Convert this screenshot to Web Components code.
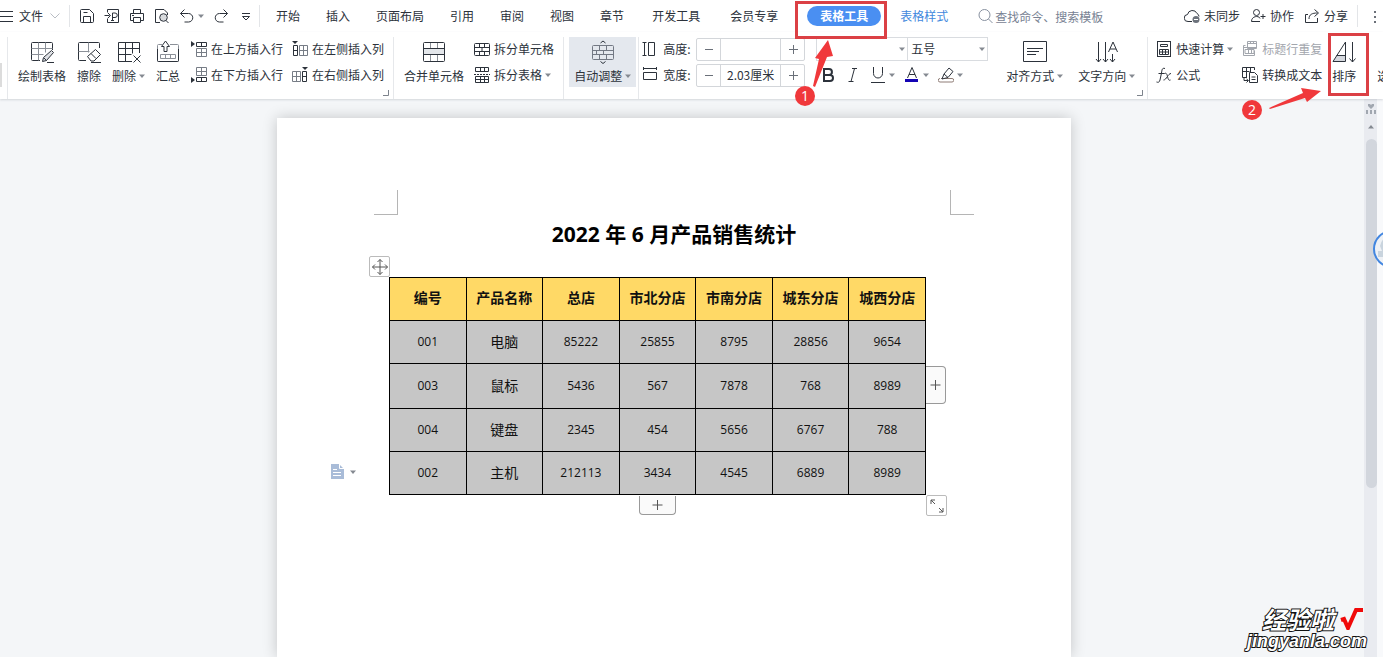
<!DOCTYPE html>
<html lang="zh-CN">
<head>
<meta charset="utf-8">
<title>2022 年 6 月产品销售统计</title>
<style>
html, body { margin: 0; height: 100%; }
body {
  font: 12px/16px "Noto Sans CJK SC", "Liberation Sans", sans-serif;
  color: #2c323b;
  overflow: hidden;
}
</style>
</head>
<body>
<doc-app></doc-app>
<script>
const BASE = `
  *, *::before, *::after { box-sizing: border-box; }
  button, input, select { font: inherit; color: inherit; margin: 0; padding: 0; border: 0; background: none; border-radius: 0; outline: 0; }
  button { cursor: pointer; white-space: nowrap; }
  svg { display: block; }
`;
function define(name, css, html, setup) {
  customElements.define(name, class extends HTMLElement {
    connectedCallback() {
      if (this.shadowRoot) return;
      const root = this.attachShadow({ mode: 'open' });
      root.innerHTML = `<style>${BASE}${css}</style>${typeof html === 'function' ? html(this) : html}`;
      if (setup) setup(root, this);
    }
  });
}

/* ---------- icons: [size, markup] ---------- */
const ICONS = {
  menu: [16, '<path d="M0 3.500h13M0 8.500h13M0 13.500h13"/>'],
  chevron: [12, '<path stroke="#b9bdc4" d="M1.500 3.500l4.500 4.500 4.500-4.500"/>'],
  save: [16, '<path d="M1.500 2.500q0-1 1-1h8l4 4v8q0 1-1 1h-11q-1 0-1-1zM4.500 14.500v-6h7v6M4.500 4.500h4"/>'],
  export: [16, '<path d="M3.500 4.500v-3h11v13h-11v-4M.5 7.500h5M4 5l2.500 2.500L4 10M8.500 12v-7h2.500a2.200 2.200 0 0 1 0 4.500h-2.500M7 12.500h3"/>'],
  print: [16, '<path d="M4.500 5.500v-4h7v4M4.500 12.500h-3v-7h13v7h-3M4.500 9.500h7v5h-7zM3 7.500h2"/>'],
  preview: [16, '<path d="M6 14.500h-4.500v-13h8.500l3.500 3.500v2M12 12.500l2.500 2.500"/><circle cx="9.500" cy="9.500" r="3.800" fill="#d8dadd"/>'],
  undo: [16, '<path d="M5.500 1.500l-4 4 4 4M1.500 5.500h8a4.200 4.200 0 0 1 0 8.500h-4"/>'],
  redo: [16, '<path d="M10.500 1.500l4 4-4 4M14.500 5.500h-8a4.200 4.200 0 0 0 0 8.500h4"/>'],
  more: [16, '<path d="M4 5.500h8M4.500 8.500l3.500 3.500 3.500-3.500z"/>'],
  caret: [6, '<path d="M0 1.500h6l-3 3.500z" fill="#858a91" stroke="none"/>'],
  search: [16, '<circle cx="6.500" cy="7" r="5.500" stroke="#8891a0"/><path stroke="#8891a0" d="M10.500 11l4 4"/>'],
  cloud: [16, '<path d="M8 13.500H4a3.500 3.500 0 0 1-.5-7 5 5 0 0 1 9.500-1 3.500 3.500 0 0 1 2 3"/><circle cx="12" cy="11.500" r="3.500" fill="#6d737c" stroke="none"/><path stroke="#fff" d="M10 11.500h4"/>'],
  people: [16, '<circle cx="6.500" cy="4.500" r="3"/><path d="M10 13.500H1.500c0-6 8-6 8.500-3M10.500 8.500h5M13 6v5"/>'],
  share: [16, '<path d="M4 6.500h-2.500v8h12V10M5 11c0-4.500 3-6 8.500-6M10.500 1.500L14.500 5l-4 3.500"/>'],
  dots: [16, '<path stroke="none" fill="#6b7079" d="M7 3h2v2H7zM7 8h2v2H7zM7 13h2v2H7z"/>'],
  draw: [24, '<path d="M10 20.500H2.500q-1 0-1-1v-16q0-1 1-1h19q1 0 1 1V10"/><path stroke="#8b9098" d="M8.500 2.500v18M15.500 2.500v10M1.500 8.500h21M1.500 14.500h12"/><path fill="#dfe1e5" d="M12.500 21.500l1-4 8-7 2 2-7 8zM14 18l2.500 2.500M17 22.500h7"/>'],
  erase: [24, '<path d="M9 20.500H2.500q-1 0-1-1v-16q0-1 1-1h19q1 0 1 1V8"/><path stroke="#8b9098" d="M11.500 2.500v10M1.500 11.500h11"/><path fill="#fff" d="M10.500 16.500l8-7 5 5-6.500 6.500h-3zM14 13.500l5 5M14 22.500h10"/>'],
  remove: [24, '<path d="M15 21.500H1.500v-19h21V13M8.500 2.500v19M15.500 2.500v11M1.500 8.500h21M1.500 14.500h13M16.500 15.500l7 7M23.500 15.500l-7 7"/>'],
  collect: [24, '<path stroke="#8b9098" d="M6 4.500H2.500q-1 0-1 1v15q0 1 1 1h19q1 0 1-1v-15q0-1-1-1H14M4.500 14.500h15v4h-15zM9.500 14.500v4M14.500 14.500v4"/><path d="M8 11.500V6.500H5.500L9.500 1l4 5.500H11v5z"/><path d="M1.500 9v11.500q0 1 1 1h19q1 0 1-1V9"/>'],
  rowAbove: [16, '<path d="M0 0l4 3-4 3z" fill="#2c323b" stroke="none"/><path d="M5.500 1.500h10v4h-10zM10.500 1.500v4"/><path stroke="#777d86" d="M5.500 7.500h10v8h-10zM10.500 7.500v8M5.500 11.500h10"/>'],
  rowBelow: [16, '<path d="M0 10l4 3-4 3z" fill="#2c323b" stroke="none"/><path d="M5.500 10.500h10v4h-10zM10.500 10.500v4"/><path stroke="#777d86" d="M5.500.5h10v8h-10zM10.500.5v8M5.500 4.500h10"/>'],
  colLeft: [16, '<path d="M0 0h6L3 3z" fill="#2c323b" stroke="none"/><path d="M1.500 4.500h4v10h-4zM1.500 9.500h4"/><path stroke="#777d86" d="M7.500 4.500h8v10h-8zM11.500 4.500v10M7.500 9.500h8"/>'],
  colRight: [16, '<path d="M10 0h6l-3 3z" fill="#2c323b" stroke="none"/><path d="M10.500 4.500h4v10h-4zM10.500 9.500h4"/><path stroke="#777d86" d="M.5 4.500h8v10h-8zM4.500 4.500v10M.5 9.500h8"/>'],
  merge: [24, '<path fill="#e3e6ea" stroke="none" d="M1 9h22v6H1z"/><rect x="1.500" y="2.500" width="21" height="19" rx="1"/><path d="M1.500 8.500h21M1.500 14.500h21"/><path stroke="#8b9098" d="M8.500 3v5M15.500 3v5M8.500 15v6M15.500 15v6"/>'],
  splitCell: [16, '<rect x=".5" y="2.500" width="15" height="12" rx="1"/><path d="M.5 6.500h15M.5 10.500h15M5.500 2.500v4M10.500 2.500v4M5.500 10.500v4M10.500 10.500v4M8 6.500v4"/>'],
  splitTable: [16, '<path d="M1.500.5h13v4h-13zM6.500.5v4M10.500.5v4M1.500 9.500h13v6h-13zM1.500 12.500h13M6.500 9.500v6M10.500 9.500v6"/><path stroke-dasharray="2 1" d="M0 7.500h16"/>'],
  fit: [24, '<rect x="1.500" y="5.500" width="21" height="14" rx="1" stroke="#737984"/><path stroke="#737984" d="M1.500 10.500h21M1.500 14.500h21M8.500 5.500v5M15.500 5.500v5M5.500 10.500v4M12.500 10.500v4M8.500 14.500v5M15.500 14.500v5"/><path d="M9.500 3l2.500-2 2.500 2M9.500 21.500l2.500 2 2.500-2"/>'],
  height: [16, '<path d="M.5 1.500h4M.5 14.500h4M2.500 1.500v13M6.500 1.500h6v13h-6z"/>'],
  width: [16, '<path d="M1.500 0v3M14.500 0v3M1.500 1.500h13M1.500 5.500h13v7h-13z"/>'],
  bold: [16, '<path stroke-width="2" d="M4 2v12M3 2h6a2.900 2.900 0 0 1 0 5.900H4M9 8h1a3 3 0 0 1 0 6H3"/>'],
  italic: [16, '<path d="M7 1.500h5M3.500 14.500h5M9.500 1.500l-3.500 13"/>'],
  underline: [16, '<path d="M3.500 0v6.500a4.500 4.500 0 0 0 9 0V0M1 15.500h14"/>'],
  fontColor: [16, '<path d="M3.500 11L8 .500l4.500 10.500M5 7.500h6"/><path fill="#1403b4" stroke="none" d="M1 12h13v3H1z"/>'],
  highlight: [16, '<path stroke="#8f7d76" d="M3 11.500h11a1.500 1.500 0 0 1 0 3.500H2a1.500 1.500 0 0 1 0-3.500"/><path fill="#fff" d="M4 12l2-5 5-6 4 3.500-5 6zM6 7l4 3.500"/>'],
  align: [24, '<path d="M.5 1.500h23v20H.5zM4 8.500h16M4 11.500h12M4 14.500h9"/>'],
  direction: [24, '<path d="M3.500 2v20M1 19l2.500 3L6 19M10.500 2v20M8 19l2.500 3 2.500-3M17.500 14v8M15 19l2.500 3 2.500-3M13.500 12L18 2l4.500 10M15 9h6"/>'],
  calc: [16, '<rect x="1.500" y=".5" width="13" height="15"/><path d="M4.500 3.500h7v2h-7zM3.500 8.500h9v5h-9zM6.500 8.500v5M9.500 8.500v5M3.500 11h9"/>'],
  fx: [16, '<path d="M9 1.500C6 .5 6 3 5.500 6L4 13c-.5 2.500-2 2.500-3.500 2M2.500 6.500h6M8.500 6.500c2-1 2.500 1 3 3s1 4.500 3 3.500M15 6.500c-3 0-4.500 6.500-7.500 6.500"/>'],
  header: [16, '<path stroke="#a2a6ad" d="M5.500.5h9v7h-9zM5.500 2.500h9M8.500.5v2M11.500.5v2M3.500 4.500h-2v10h11v-5M3 8.500h9v4H3zM6.500 8.500v4M9.500 8.500v4M2 6.500h12"/>'],
  convert: [16, '<path d="M5 10.500H.5v-10h12V3M4.500.5v10M8.500.5v5M.5 4.500h7M7.500 5.500h5l3 3v7h-8zM9.500 10h4M9.500 12.500h4M2 10v3.500h4M4.500 12l2 1.500-2 2"/>'],
  sort: [24, '<path fill="#d5d8de" stroke="none" d="M5 15h8v6H1z"/><path d="M13.500 2v19.500H1L13.500 2M4.500 15.500h9M20.500 2v20M17.500 18.500l3 3.500 3-3.500"/>'],
  pick: [16, '<path d="M4.500 1.500v12l4-3 3 5"/>'],
  move: [20, '<path d="M10 2.500v15M2.500 10h15M7.500 5L10 2.500 12.500 5M7.500 15l2.500 2.500 2.500-2.500M5 7.500L2.500 10 5 12.500M15 7.500l2.500 2.500-2.500 2.500"/>'],
  plus: [12, '<path d="M5.500 1v10M.5 6h10"/>'],
  resize: [16, '<path d="M2 6V2h4M2 2l4 4M14 10v4h-4M14 14l-4-4"/>'],
  paste: [16, '<path fill="#a9bcd8" stroke="none" d="M1 0h8l5 5v10H1z"/><path stroke="#fff" d="M9.500 0v4.500H14M3 5.500h4M3 8.500h8M3 11.500h8"/>'],
  ruler: [12, '<path fill="#a1a7b0" stroke="none" d="M3 1h2l1 1 1-1h2v2L6 6 3 3zM1 7h2v4H1zM5 7h2v4H5zM9 7h2v4H9z"/>']
};
define('ui-icon', `:host { display: block; flex: none; }`, el => {
  const [size, body] = ICONS[el.getAttribute('name')];
  return `<svg width="${size}" height="${size}" viewBox="0 0 ${size} ${size}" fill="none" stroke="currentColor" aria-hidden="true">${body}</svg>`;
});

/* ---------- menu bar pieces ---------- */
define('icon-button', `
  :host { display: block; flex: none; }
  button { display: flex; align-items: center; gap: 3px; }`,
  el => `<button aria-label="${el.getAttribute('label')}"><ui-icon name="${el.getAttribute('icon')}"></ui-icon>${el.hasAttribute('menu') ? '<ui-icon name="caret"></ui-icon>' : ''}</button>`);

define('menu-tab', `
  :host { display: block; flex: none; }
  button { display: block; padding: 2px 13px; }
  :host([wide]) button { padding: 2px 15px; }
  :host([active]) { margin: 0 6px 0 14px; }
  :host([active]) button { background: #4a8ff2; color: #fff; font-weight: 700; border-radius: 10px; }
  :host([tone=blue]) button { color: #4288dd; }`,
  `<button><slot></slot></button>`);

define('icon-link', `
  :host { display: block; flex: none; }
  button { display: flex; align-items: center; gap: 4px; }`,
  el => `<button><ui-icon name="${el.getAttribute('icon')}"></ui-icon><slot></slot></button>`);

define('ui-rule', `:host { display: block; flex: none; width: 1px; height: 22px; background: #e3e5e8; }`, '');

define('menu-bar', `
  :host { display: flex; align-items: center; height: 32px; background: #fff; overflow: hidden; }
  .file { display: flex; align-items: center; gap: 3px; padding-right: 8px; }
  .file ui-icon:last-child { margin-left: 3px; }
  .quick { display: flex; align-items: center; gap: 9px; padding: 0 5px 0 9px; }
  nav { display: flex; align-items: center; padding-left: 3px; }
  .search { display: flex; align-items: center; gap: 1px; margin-left: 17px; }
  .search input { width: 130px; height: 20px; }
  .search input::placeholder { color: #788293; opacity: 1; }
  .right { display: flex; align-items: center; gap: 10px; margin-left: auto; }
  .right ui-rule { margin: 0 -1px; }
`, `
  <button class="file"><ui-icon name="menu"></ui-icon>文件 <ui-icon name="chevron"></ui-icon></button>
  <ui-rule></ui-rule>
  <div class="quick">
    <icon-button icon="save" label="保存"></icon-button>
    <icon-button icon="export" label="输出为PDF"></icon-button>
    <icon-button icon="print" label="打印"></icon-button>
    <icon-button icon="preview" label="打印预览"></icon-button>
    <icon-button icon="undo" label="撤销" menu></icon-button>
    <icon-button icon="redo" label="恢复"></icon-button>
    <icon-button icon="more" label="自定义"></icon-button>
  </div>
  <ui-rule></ui-rule>
  <nav>
    <menu-tab>开始</menu-tab><menu-tab>插入</menu-tab><menu-tab>页面布局</menu-tab><menu-tab>引用</menu-tab>
    <menu-tab>审阅</menu-tab><menu-tab>视图</menu-tab><menu-tab>章节</menu-tab>
    <menu-tab wide>开发工具</menu-tab><menu-tab wide>会员专享</menu-tab>
    <menu-tab active>表格工具</menu-tab><menu-tab tone="blue">表格样式</menu-tab>
  </nav>
  <label class="search"><ui-icon name="search"></ui-icon><input type="text" aria-label="查找" placeholder="查找命令、搜索模板"></label>
  <div class="right">
    <icon-link icon="cloud">未同步</icon-link>
    <icon-link icon="people">协作</icon-link>
    <icon-link icon="share">分享</icon-link>
    <ui-rule></ui-rule>
    <icon-button icon="dots" label="更多"></icon-button>
  </div>`);

/* ---------- ribbon pieces ---------- */
define('big-command', `
  :host { display: block; flex: none; }
  button { display: flex; flex-direction: column; align-items: center; gap: 4px; height: 50px; padding: 3px 5px; }
  :host([pressed]) button { background: #e4e8ee; }
  .icon { display: flex; align-items: center; height: 24px; }
  .label { display: flex; align-items: center; gap: 3px; }`,
  el => `<button><span class="icon"><ui-icon name="${el.getAttribute('icon')}"></ui-icon></span><span class="label"><slot></slot>${el.hasAttribute('menu') ? '<ui-icon name="caret"></ui-icon>' : ''}</span></button>`);

define('row-command', `
  :host { display: block; flex: none; }
  button { display: flex; align-items: center; gap: 4px; height: 24px; }
  :host([disabled]) button { color: #a2a6ad; }
  ui-icon[name=caret] { margin-left: -1px; }`,
  el => `<button ${el.hasAttribute('disabled') ? 'disabled' : ''}><ui-icon name="${el.getAttribute('icon')}"></ui-icon><slot></slot>${el.hasAttribute('menu') ? '<ui-icon name="caret"></ui-icon>' : ''}</button>`);

define('size-spinner', `
  :host { display: flex; align-items: center; height: 24px; }
  label { width: 33px; margin-left: 5px; }
  .box { display: grid; grid-template-columns: 23px 61px 23px; height: 23px; border: 1px solid #d3d6da; border-radius: 2px; }
  input { min-width: 0; text-align: center; border: solid #d3d6da; border-width: 0 1px; }
  button { display: grid; place-items: center; color: #6a7079; }
  button svg { stroke: currentColor; }`,
  el => `<ui-icon name="${el.getAttribute('icon')}"></ui-icon><label for="v">${el.getAttribute('label')}</label>
  <div class="box"><button aria-label="减小"><svg width="10" height="10"><path d="M1 5.500h8"/></svg></button>
  <input id="v" type="text" value="${el.getAttribute('value') || ''}">
  <button aria-label="增大"><svg width="10" height="10"><path d="M1 5.500h9M5.500 1v9"/></svg></button></div>`);

define('drop-select', `
  :host { display: block; position: relative; }
  select { appearance: none; width: 100%; height: 24px; padding-left: 3px; border: 1px solid #d9dce0; background: #fff; }
  ui-icon { position: absolute; right: 3px; top: 9px; pointer-events: none; }`,
  el => `<select aria-label="${el.getAttribute('label')}"><option>${el.getAttribute('value') || ''}</option></select><ui-icon name="caret"></ui-icon>`);

define('dialog-launcher', `
  :host { display: block; position: absolute; right: 4px; bottom: 3px; }
  button { display: block; }`,
  `<button aria-label="更多设置"><svg width="6" height="6" fill="none" stroke="#7d838c"><path d="M5.500 0v5.500H0"/></svg></button>`);

define('command-stack', `:host { display: flex; flex-direction: column; gap: 2px; flex: none; }`, '<slot></slot>');

define('ribbon-group', `
  :host { display: flex; position: relative; flex: none; height: 62px; border-right: 1px solid #e6e8eb; align-items: flex-start; }
  :host([last]) { border-right: 0; }`, '<slot></slot>');

define('tool-ribbon', `
  :host { display: flex; height: 67px; padding-top: 5px; background: #fff; overflow: hidden; position: relative; z-index: 1; box-shadow: 0 1px 2px rgba(60,70,90,.18); }
  .stub { width: 8px; padding-top: 26px; }
  .stub::before { content: ""; display: block; width: 2px; height: 24px; background: #dcdcdc; }
  .table { gap: 1px; padding: 0 9px 0 5px; }
  .cols { display: flex; gap: 9px; margin-left: 5px; }
  .merge { padding: 0 9px 0 5px; gap: 5px; }
  .fit { padding: 0 2px 0 5px; }
  .text { padding: 0 7px 0 3px; }
  .font { width: 171px; margin-left: 11px; }
  .selects { display: grid; grid-template-columns: 92px 80px; }
  .selects drop-select + drop-select { margin-left: -1px; }
  .marks { display: flex; align-items: center; gap: 9px; height: 24px; padding-left: 4px; }
  .layout { display: flex; gap: 5px; margin-left: 14px; }
  .data { padding-left: 8px; gap: 9px; }
  .sort { margin-left: -4px; }
  .next { margin-left: 2px; }
`, `
  <ribbon-group class="stub"></ribbon-group>
  <ribbon-group class="table">
    <big-command icon="draw">绘制表格</big-command>
    <big-command icon="erase">擦除</big-command>
    <big-command icon="remove" menu>删除</big-command>
    <big-command icon="collect">汇总</big-command>
    <div class="cols">
      <command-stack><row-command icon="rowAbove">在上方插入行</row-command><row-command icon="rowBelow">在下方插入行</row-command></command-stack>
      <command-stack><row-command icon="colLeft">在左侧插入列</row-command><row-command icon="colRight">在右侧插入列</row-command></command-stack>
    </div>
    <dialog-launcher></dialog-launcher>
  </ribbon-group>
  <ribbon-group class="merge">
    <big-command icon="merge">合并单元格</big-command>
    <command-stack><row-command icon="splitCell">拆分单元格</row-command><row-command icon="splitTable" menu>拆分表格</row-command></command-stack>
  </ribbon-group>
  <ribbon-group class="fit"><big-command icon="fit" pressed menu>自动调整</big-command></ribbon-group>
  <ribbon-group class="text">
    <command-stack><size-spinner icon="height" label="高度:"></size-spinner><size-spinner icon="width" label="宽度:" value="2.03厘米"></size-spinner></command-stack>
    <command-stack class="font">
      <div class="selects"><drop-select label="字体"></drop-select><drop-select label="字号" value="五号"></drop-select></div>
      <div class="marks">
        <icon-button icon="bold" label="加粗"></icon-button>
        <icon-button icon="italic" label="倾斜"></icon-button>
        <icon-button icon="underline" label="下划线" menu></icon-button>
        <icon-button icon="fontColor" label="字体颜色" menu></icon-button>
        <icon-button icon="highlight" label="突出显示" menu></icon-button>
      </div>
    </command-stack>
    <div class="layout"><big-command icon="align" menu>对齐方式</big-command><big-command icon="direction" menu>文字方向</big-command></div>
    <dialog-launcher></dialog-launcher>
  </ribbon-group>
  <ribbon-group class="data" last>
    <command-stack><row-command icon="calc" menu>快速计算</row-command><row-command icon="fx">公式</row-command></command-stack>
    <command-stack><row-command icon="header" disabled>标题行重复</row-command><row-command icon="convert">转换成文本</row-command></command-stack>
    <big-command class="sort" icon="sort">排序</big-command>
    <big-command class="next" icon="pick" menu>选择</big-command>
  </ribbon-group>`);

/* ---------- document ---------- */
const HEAD = ['编号', '产品名称', '总店', '市北分店', '市南分店', '城东分店', '城西分店'];
const ROWS = [
  ['001', '电脑', '85222', '25855', '8795', '28856', '9654'],
  ['003', '鼠标', '5436', '567', '7878', '768', '8989'],
  ['004', '键盘', '2345', '454', '5656', '6767', '788'],
  ['002', '主机', '212113', '3434', '4545', '6889', '8989']
];
define('sales-table', `
  :host { display: block; position: relative; width: 537px; color: #111; }
  table { width: 100%; table-layout: fixed; border-collapse: collapse; font: 12px/20px "Open Sans", "Noto Sans CJK SC", sans-serif; }
  th, td { border: 1px solid #000; text-align: center; padding: 11px 0; height: 43px; }
  th { background: #ffd966; font-size: 14px; padding: 10px 0 12px; }
  td { background: #c6c6c6; }
  td:nth-child(2) { font-size: 14px; }
  tr:nth-child(2) td { height: 45px; }
  .handle { position: absolute; display: grid; place-items: center; color: #555; background: #fff; border: 1px solid #bbb; border-radius: 2px; }
  .move { left: -20px; top: -21px; width: 21px; height: 21px; }
  .col { left: 100%; top: 89px; width: 20px; height: 38px; border-left: 0; background: #fafafa; border-radius: 0 4px 4px 0; border-color: #999; }
  .row { left: 250px; top: 100%; width: 37px; height: 19px; border-top: 0; background: #fafafa; border-radius: 0 0 4px 4px; border-color: #999; margin-top: 1px; }
  .size { left: 100%; top: 100%; width: 21px; height: 21px; }
  .paste { position: absolute; left: -59px; bottom: 15px; display: flex; align-items: center; gap: 4px; }
`, `
  <table>
    <thead><tr>${HEAD.map(t => `<th scope="col">${t}</th>`).join('')}</tr></thead>
    <tbody>${ROWS.map(r => `<tr>${r.map(t => `<td>${t}</td>`).join('')}</tr>`).join('')}</tbody>
  </table>
  <button class="handle move" aria-label="移动表格"><ui-icon name="move"></ui-icon></button>
  <button class="handle col" aria-label="添加列"><ui-icon name="plus"></ui-icon></button>
  <button class="handle row" aria-label="添加行"><ui-icon name="plus"></ui-icon></button>
  <button class="handle size" aria-label="调整表格大小"><ui-icon name="resize"></ui-icon></button>
  <button class="paste" aria-label="粘贴选项"><ui-icon name="paste"></ui-icon><ui-icon name="caret"></ui-icon></button>`);

define('doc-page', `
  :host { display: block; width: 794px; flex: none; padding: 72px 97px 0; background: #fff; box-shadow: 0 0 14px rgba(0,0,0,.2); }
  .corners { display: flex; justify-content: space-between; }
  .corners i { width: 24px; height: 25px; border: solid #b5b5b5; border-width: 0 1px 1px 0; }
  .corners i:last-child { border-width: 0 0 1px 1px; }
  h1 { margin: 3px 0 27px; font: 700 21px/32px "Open Sans", "Noto Sans CJK SC", sans-serif; color: #000; text-align: center; }
  sales-table { margin-left: 15px; }
`, `
  <div class="corners"><i></i><i></i></div>
  <h1>2022 年 6 月产品销售统计</h1>
  <sales-table></sales-table>`);

define('page-scroller', `
  :host { display: flex; flex-direction: column; align-items: center; gap: 9px; width: 19px; padding: 4px 6px 0 1px; background: linear-gradient(90deg, #e9ebf0 13px, #f8f9fb 13px); color: #7b828d; }
  .up { transform: rotate(180deg); }
  .thumb { width: 11px; height: 63%; min-height: 40px; border-radius: 6px; background: #d2d6dd; }`,
  `<ui-icon name="ruler"></ui-icon><ui-icon class="up" name="caret"></ui-icon><div class="thumb"></div>`);

define('side-badge', `
  :host { display: block; position: absolute; right: -27px; top: 130px; }`,
  `<svg width="38" height="40" viewBox="0 0 38 40"><circle cx="20" cy="20" r="18" fill="#eef1f5" stroke="#4286e0" stroke-width="2"/><path fill="#c9d4de" d="M8 17q1-6 6-9v20H6v-6h4z"/></svg>`);

define('doc-canvas', `
  :host { display: flex; flex: 1; min-height: 0; position: relative; background: #f4f6f8; overflow: hidden; }
  main { flex: 1; display: flex; justify-content: center; padding: 19px 16px 0 0; min-width: 0; }`,
  `<main><doc-page></doc-page></main><page-scroller></page-scroller><side-badge></side-badge>`);

/* ---------- tutorial marks laid over the window ---------- */
define('guide-marks', `
  :host { position: absolute; inset: 0; z-index: 5; pointer-events: none; }
  .frame { position: absolute; border: 3px solid #db4045; }
  .tab { left: 795px; top: 1px; width: 92px; height: 38px; }
  .sort { left: 1328px; top: 33px; width: 41px; height: 63px; }
  svg { position: absolute; left: 0; top: 0; }
  .num { position: absolute; width: 20px; height: 20px; border-radius: 50%; background: #f0383b; color: #fff; font: 14px/20px "Open Sans", sans-serif; text-align: center; }
  .one { left: 795px; top: 86px; }
  .two { left: 1242px; top: 100px; }`, `
  <div class="frame tab"></div><div class="frame sort"></div>
  <svg width="1383" height="130" fill="#f0383b"><path d="M828 40l5 16-6 1-12 30-2-1 6-27-4-1zM1321 91l-14 11-2-4-35 11-1-1 34-15-2-5z"/></svg>
  <span class="num one">1</span><span class="num two">2</span>`);

define('site-mark', `
  :host { position: absolute; right: 16px; bottom: 7px; z-index: 6; display: flex; flex-direction: column; align-items: flex-end; gap: 2px; color: #fff; pointer-events: none; }
  span { -webkit-text-stroke: 2px #111; paint-order: stroke fill; }
  .name { display: flex; align-items: center; gap: 5px; padding-right: 4px; font: italic 700 24px/22px "Noto Sans CJK SC", sans-serif; }
  .site { font: italic 700 18px/18px "Liberation Sans", sans-serif; }`, `
  <div class="name"><span>经验啦</span><svg width="24" height="22" fill="none" stroke="#f00a0a" stroke-width="4"><path d="M2 12l3-1 4 9L17 2h7"/></svg></div>
  <span class="site">jingyanla.com</span>`);

define('doc-app', `:host { display: flex; flex-direction: column; height: 100vh; position: relative; overflow: hidden; }`,
  `<menu-bar></menu-bar><tool-ribbon></tool-ribbon><doc-canvas></doc-canvas><guide-marks></guide-marks><site-mark></site-mark>`);
</script>
</body>
</html>
